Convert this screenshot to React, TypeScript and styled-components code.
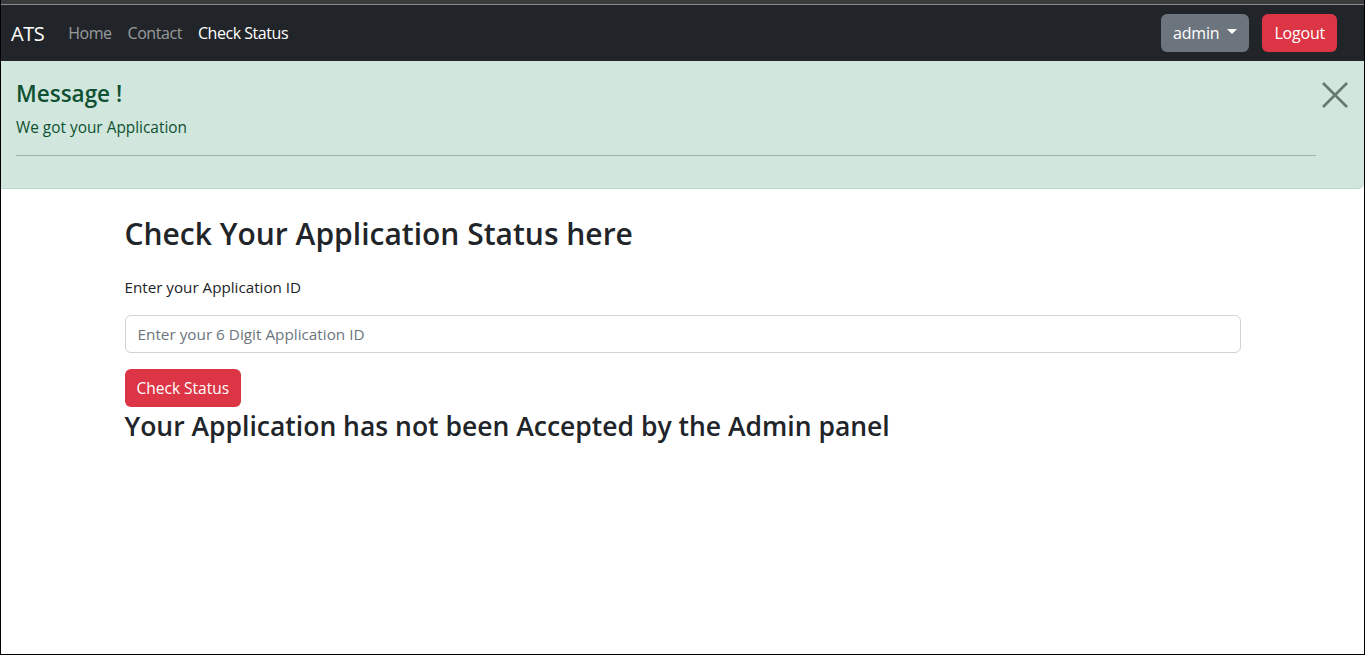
import React from "react";
import styled, { createGlobalStyle } from "styled-components";

const GlobalStyle = createGlobalStyle`
  html, body { margin: 0; padding: 0; background: #fff; }
  body {
    font-family: "Open Sans", "Noto Sans", "Liberation Sans", sans-serif;
    font-size: 16px;
    color: #212529;
  }
  * { box-sizing: border-box; }
`;

const Frame = styled.div`
  width: 1365px;
  height: 655px;
  border: 1px solid #000;
  border-top: none;
  overflow: hidden;
  display: flex;
  flex-direction: column;
  background: #fff;
`;

const TopStrip = styled.div`
  height: 5px;
  background: #3a3b3d;
  border-bottom: 1px solid #8a8b8d;
  flex: none;
`;

const Navbar = styled.nav`
  height: 56px;
  flex: none;
  background: #212529;
  display: flex;
  align-items: center;
  padding: 0 27px 0 10px;
`;

const Brand = styled.a`
  color: #fff;
  font-size: 20px;
  margin-right: 16px;
  text-decoration: none;
  letter-spacing: -0.5px;
`;

const NavLink = styled.a<{ $active?: boolean }>`
  color: ${(p) => (p.$active ? "#fff" : "rgba(255,255,255,0.55)")};
  padding: 8px;
  font-size: 16px;
  text-decoration: none;
  letter-spacing: -0.45px;
`;

const Spacer = styled.div`
  flex: 1;
`;

const Button = styled.button<{ $variant: "secondary" | "danger" }>`
  font-family: inherit;
  font-size: 16px;
  height: 38px;
  padding: 0 12px;
  border: none;
  border-radius: 6px;
  color: #fff;
  background: ${(p) => (p.$variant === "danger" ? "#dc3545" : "#6c757d")};
  display: inline-flex;
  align-items: center;
  letter-spacing: -0.2px;
  cursor: pointer;
`;

const Caret = styled.span`
  display: inline-block;
  margin-left: 8px;
  border-top: 5px solid #fff;
  border-left: 5px solid transparent;
  border-right: 5px solid transparent;
  margin-top: -3px;
`;

const NavButtons = styled.div`
  display: flex;
  gap: 13px;
`;

const Alert = styled.div`
  position: relative;
  background: #d1e7dd;
  color: #0f5132;
  border-bottom: 1px solid #badbcc;
  border-radius: 0 0 6px 0;
  padding: 18px 48px 16px 15px;
  flex: none;
`;

const AlertHeading = styled.h4`
  margin: 0 0 7px;
  font-size: 22.5px;
  font-weight: 600;
  line-height: 30px;
`;

const AlertText = styled.p`
  margin: 0 0 15px;
  font-size: 15.4px;
  line-height: 24px;
`;

const AlertRule = styled.hr`
  margin: 0 0 16px;
  border: none;
  border-top: 1px solid #9db5aa;
`;

const CloseButton = styled.button`
  position: absolute;
  top: 20px;
  right: 15px;
  width: 28px;
  height: 28px;
  padding: 0;
  border: none;
  background: transparent;
  display: flex;
  align-items: center;
  justify-content: center;
  cursor: pointer;
`;

const Container = styled.main`
  width: 1140px;
  margin: 0 auto;
  padding: 26px 12px 0;
`;

const Title = styled.h2`
  margin: 0 0 22px;
  font-size: 30px;
  font-weight: 600;
  line-height: 38px;
`;

const Label = styled.label`
  display: block;
  font-size: 15.2px;
  line-height: 24px;
  margin-bottom: 16px;
`;

const Input = styled.input`
  display: block;
  width: 100%;
  height: 38px;
  padding: 6px 12px;
  font-family: inherit;
  font-size: 15.3px;
  color: #212529;
  border: 1px solid #ced4da;
  border-radius: 6px;
  margin-bottom: 16px;
  &::placeholder { color: #6c757d; }
`;

const SubmitButton = styled(Button)`
  height: 38px;
  font-size: 15.5px;
  letter-spacing: 0;
`;

const Result = styled.h3`
  margin: 0;
  font-size: 26.5px;
  font-weight: 600;
  line-height: 38px;
`;

export default function App() {
  return (
    <>
      <GlobalStyle />
      <Frame>
        <TopStrip />
        <Navbar>
          <Brand href="#">ATS</Brand>
          <NavLink href="#">Home</NavLink>
          <NavLink href="#">Contact</NavLink>
          <NavLink href="#" $active>
            Check Status
          </NavLink>
          <Spacer />
          <NavButtons>
            <Button $variant="secondary">
              admin
              <Caret />
            </Button>
            <Button $variant="danger">Logout</Button>
          </NavButtons>
        </Navbar>
        <Alert>
          <AlertHeading>Message !</AlertHeading>
          <AlertText>We got your Application</AlertText>
          <AlertRule />
          <CloseButton aria-label="Close">
            <svg width="26" height="26" viewBox="0 0 26 26">
              <path
                d="M1 1 L25 25 M25 1 L1 25"
                stroke="#66796f"
                strokeWidth="2.6"
                fill="none"
              />
            </svg>
          </CloseButton>
        </Alert>
        <Container>
          <Title>Check Your Application Status here</Title>
          <Label htmlFor="appid">Enter your Application ID</Label>
          <Input id="appid" placeholder="Enter your 6 Digit Application ID" />
          <SubmitButton $variant="danger">Check Status</SubmitButton>
          <Result>Your Application has not been Accepted by the Admin panel</Result>
        </Container>
      </Frame>
    </>
  );
}
